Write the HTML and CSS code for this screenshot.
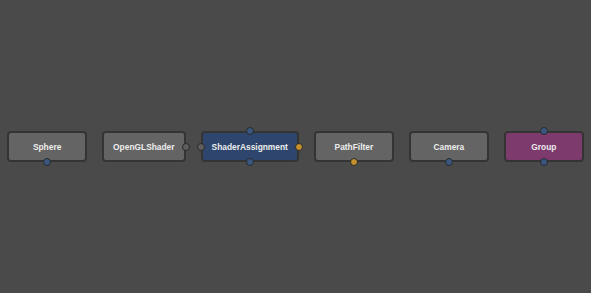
FILE: index.html
```html
<!doctype html>
<html>
<head>
    <meta charset="utf-8">
    <link rel="stylesheet" href="styles.css">
</head>
<body>
    <div class="graph">
        <div class="node">
            <span>Sphere</span>
            <i class="port bottom blue"></i>
        </div>
        <div class="node">
            <span>OpenGLShader</span>
            <i class="port right grey"></i>
        </div>
        <div class="node shader">
            <span>ShaderAssignment</span>
            <i class="port top blue"></i>
            <i class="port left grey"></i>
            <i class="port right gold"></i>
            <i class="port bottom blue"></i>
        </div>
        <div class="node">
            <span>PathFilter</span>
            <i class="port bottom gold"></i>
        </div>
        <div class="node">
            <span>Camera</span>
            <i class="port bottom blue"></i>
        </div>
        <div class="node group">
            <span>Group</span>
            <i class="port top blue"></i>
            <i class="port bottom blue"></i>
        </div>
    </div>
</body>
</html>
```

FILE: styles.css
```css
html, body {
    height: 100%;
    margin: 0;
    background-color: #4a4a4a;
    font-family: "Liberation Sans", Arial, sans-serif;
}

.graph {
    height: 100%;
    display: flex;
    align-items: center;
    justify-content: center;
    gap: 15px;
}

.node {
    position: relative;
    box-sizing: border-box;
    min-width: 80px;
    height: 31px;
    padding: 0 9px;
    display: flex;
    align-items: center;
    justify-content: center;
    background: #646464;
    border: 2px solid #343434;
    border-radius: 4px;
    color: #ececec;
    font-size: 8.4px;
    font-weight: bold;
    white-space: nowrap;
}

.node.shader {
    background: #2e466d;
}

.node.group {
    background: #7d3a6d;
}

.port {
    position: absolute;
    width: 8px;
    height: 8px;
    box-sizing: border-box;
    border-radius: 50%;
    border: 1px solid #2a2a2a;
}

.port.blue { background: #3a5782; }
.port.grey { background: #5e5e5e; }
.port.gold { background: #c4902c; }

.port.top    { top: -6px;    left: 50%; margin-left: -4px; }
.port.bottom { bottom: -6px; left: 50%; margin-left: -4px; }
.port.left   { left: -6px;   top: 50%;  margin-top: -4px; }
.port.right  { right: -6px;  top: 50%;  margin-top: -4px; }
```
